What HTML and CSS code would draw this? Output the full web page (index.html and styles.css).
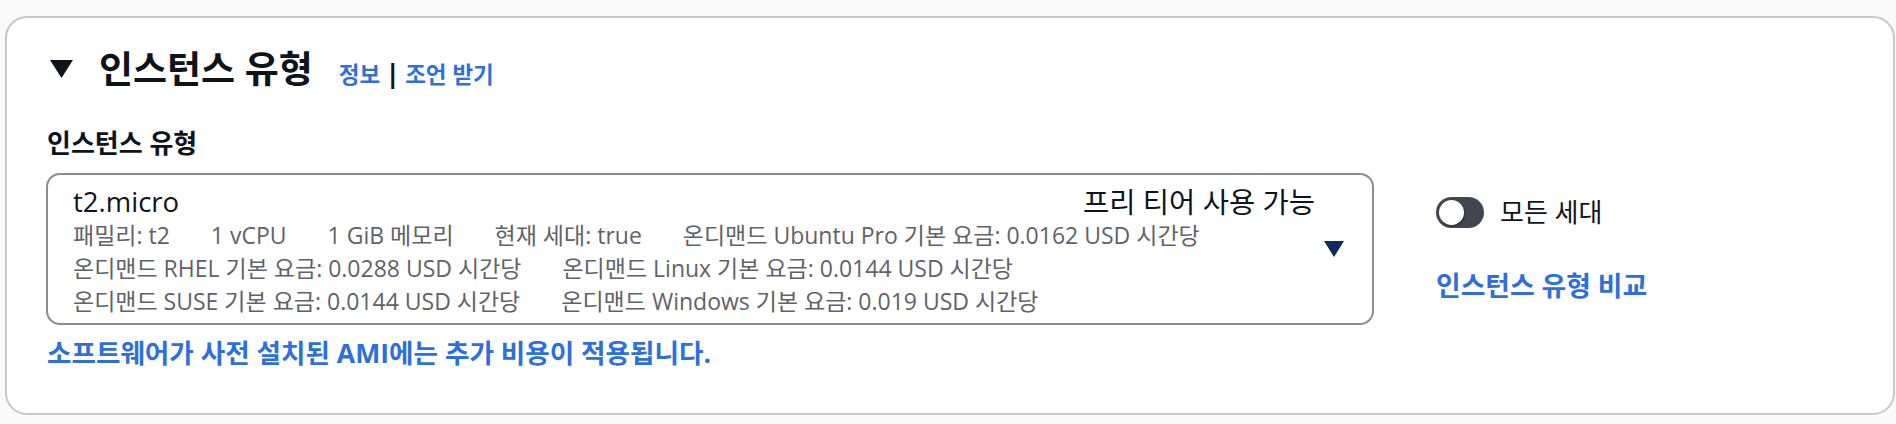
FILE: index.html
```html
<!DOCTYPE html>
<html lang="ko">
<head>
<meta charset="utf-8">
<title>인스턴스 유형</title>
<link rel="stylesheet" href="styles.css">
</head>
<body>
<section class="card">
  <header class="card-header">
    <svg class="caret" width="23" height="18" viewBox="0 0 23 18"><polygon points="0,0 23,0 11.5,18" fill="#0f141a"/></svg>
    <h2 class="title">인스턴스 유형</h2>
    <a class="info-link">정보</a>
    <span class="sep">|</span>
    <a class="info-link">조언 받기</a>
  </header>
  <div class="content">
    <div class="field">
      <div class="label">인스턴스 유형</div>
      <div class="select">
        <div class="option">
          <div class="option-top">
            <span class="option-name">t2.micro</span>
            <span class="option-tag">프리 티어 사용 가능</span>
          </div>
          <div class="tags">
            <span>패밀리: t2</span>
            <span>1 vCPU</span>
            <span>1 GiB 메모리</span>
            <span>현재 세대: true</span>
            <span>온디맨드 Ubuntu Pro 기본 요금: 0.0162 USD 시간당</span>
            <span>온디맨드 RHEL 기본 요금: 0.0288 USD 시간당</span>
            <span>온디맨드 Linux 기본 요금: 0.0144 USD 시간당</span>
            <span>온디맨드 SUSE 기본 요금: 0.0144 USD 시간당</span>
            <span>온디맨드 Windows 기본 요금: 0.019 USD 시간당</span>
          </div>
        </div>
        <div class="select-arrow">
          <svg width="20" height="16" viewBox="0 0 20 16"><polygon points="0,0 20,0 10,16" fill="#0c2b63"/></svg>
        </div>
      </div>
      <div class="footnote">소프트웨어가 사전 설치된 AMI에는 추가 비용이 적용됩니다.</div>
    </div>
    <div class="side">
      <label class="toggle-row">
        <span class="toggle"><span class="knob"></span></span>
        <span class="toggle-label">모든 세대</span>
      </label>
      <a class="compare-link">인스턴스 유형 비교</a>
    </div>
  </div>
</section>
</body>
</html>
```

FILE: styles.css
```css
* { box-sizing: border-box; }
html, body {
  margin: 0;
  padding: 0;
  background: #fafafa;
}
body {
  font-family: "Open Sans", "Noto Sans CJK KR", sans-serif;
  color: #0f141a;
  padding: 16px 1px 9px 5px;
}
.card {
  background: #ffffff;
  border: 2px solid #c6c6cd;
  border-radius: 22px;
  padding: 30px 20px 45px 39px;
  height: 399px;
}
.card-header {
  display: flex;
  align-items: baseline;
  height: 42px;
}
.caret {
  margin-left: 4px;
  margin-right: 26px;
  align-self: center;
}
.title {
  margin: 0;
  font-size: 37px;
  line-height: 42px;
  font-weight: 700;
}
.info-link {
  color: #2d6fdb;
  font-size: 22.5px;
  font-weight: 700;
  cursor: pointer;
}
.title + .info-link { margin-left: 26px; }
.sep {
  font-size: 27px;
  margin: 0 5px 0 5px;
  color: #0f141a;
  font-weight: 700;
}
.content {
  display: flex;
  gap: 62px;
  margin-top: 38px;
}
.field {
  width: 1328px;
  flex: none;
}
.label {
  font-size: 26px;
  line-height: 30px;
  font-weight: 700;
  padding-left: 1px;
}
.select {
  margin-top: 15px;
  height: 152px;
  border: 2px solid #8c8c94;
  border-radius: 14px;
  display: flex;
  align-items: center;
  padding: 0 28px 0 25px;
}
.option {
  flex: 1;
  align-self: stretch;
  padding-top: 10px;
}
.option-top {
  display: flex;
  justify-content: space-between;
  line-height: 34px;
}
.option-name {
  font-size: 27.5px;
}
.option-tag {
  font-size: 28.5px;
}
.tags {
  display: flex;
  flex-wrap: wrap;
  column-gap: 41px;
  font-size: 23px;
  line-height: 33px;
  color: #5f6369;
  white-space: nowrap;
}
.select-arrow {
  margin-left: 9px;
  display: flex;
  align-items: center;
}
.footnote {
  margin-top: 13px;
  font-size: 26.6px;
  line-height: 30px;
  font-weight: 700;
  color: #2d6fdb;
  padding-left: 1px;
}
.side {
  padding-top: 69px;
  display: flex;
  flex-direction: column;
  align-items: flex-start;
}
.toggle-row {
  display: flex;
  align-items: center;
  gap: 16px;
  height: 31px;
}
.toggle {
  width: 48px;
  height: 31px;
  border-radius: 16px;
  background: #424650;
  position: relative;
  flex: none;
}
.knob {
  position: absolute;
  left: 3px;
  top: 3px;
  width: 25px;
  height: 25px;
  border-radius: 50%;
  background: #ffffff;
  box-shadow: 1px 1px 2px rgba(0,0,0,0.35);
}
.toggle-label {
  font-size: 26px;
  line-height: 31px;
}
.compare-link {
  margin-top: 41px;
  font-size: 26.8px;
  line-height: 34px;
  font-weight: 700;
  color: #2d6fdb;
  cursor: pointer;
}
```
